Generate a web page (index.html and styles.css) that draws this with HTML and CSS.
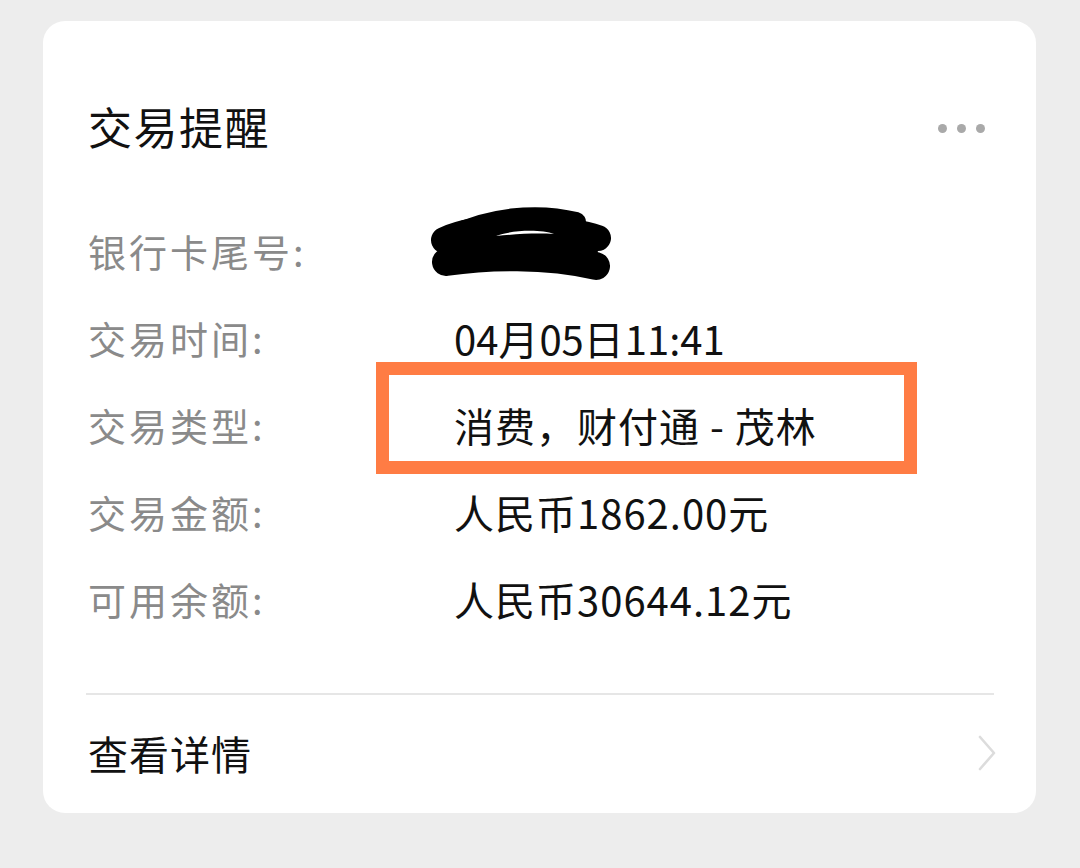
FILE: index.html
```html
<!DOCTYPE html>
<html lang="zh-CN">
<head>
<meta charset="utf-8">
<title>交易提醒</title>
<link rel="stylesheet" href="styles.css">
</head>
<body>
<div class="card">
  <div class="header">
    <div class="title">交易提醒</div>
    <div class="more"><span class="dot"></span><span class="dot"></span><span class="dot"></span></div>
  </div>
  <div class="rows">
    <div class="row">
      <div class="label">银行卡尾号:</div>
      <div class="value">
        <svg class="scribble" width="190" height="84" viewBox="0 0 190 84">
          <g fill="none" stroke="#000" stroke-linecap="round" stroke-linejoin="round">
            <path d="M18 34 C40 24, 70 20, 110 22 C140 24, 160 28, 172 32" stroke-width="26"/>
            <path d="M26 30 C60 12, 110 6, 150 16" stroke-width="20"/>
            <path d="M20 56 C60 50, 120 48, 170 60" stroke-width="28"/>
            <path d="M30 42 L160 44" stroke-width="24"/>
          </g>
          <path d="M70 30 C85 24, 115 23, 128 28 C110 27, 90 28, 70 30 Z" fill="#fff"/>
        </svg>
      </div>
    </div>
    <div class="row">
      <div class="label">交易时间:</div>
      <div class="value"><span class="num">04</span>月<span class="num">05</span>日<span class="num">11:41</span></div>
    </div>
    <div class="row">
      <div class="label">交易类型:</div>
      <div class="value">消费，财付通 - 茂林<span class="highlight"></span></div>
    </div>
    <div class="row">
      <div class="label">交易金额:</div>
      <div class="value">人民币1862.00元</div>
    </div>
    <div class="row">
      <div class="label">可用余额:</div>
      <div class="value">人民币30644.12元</div>
    </div>
  </div>
  <div class="divider"></div>
  <div class="footer">
    <div class="footer-text">查看详情</div>
    <svg class="chevron" width="20" height="36" viewBox="0 0 20 36">
      <path d="M3 2 L17 18 L3 34" fill="none" stroke="#dcdcdc" stroke-width="2.6" stroke-linecap="round" stroke-linejoin="round"/>
    </svg>
  </div>
</div>
</body>
</html>
```

FILE: styles.css
```css
* { box-sizing: border-box; }
html, body {
  margin: 0;
  padding: 0;
  background: #ededed;
}
body {
  font-family: "Noto Sans CJK SC", "Noto Sans", sans-serif;
  padding: 21px 44px 0 43px;
}
.card {
  width: 993px;
  height: 792px;
  background: #ffffff;
  border-radius: 22px;
  padding: 75px 51px 0 45px;
  display: flex;
  flex-direction: column;
}
.header {
  display: flex;
  align-items: center;
  justify-content: space-between;
  height: 60px;
}
.title {
  font-size: 44px;
  line-height: 60px;
  color: #111111;
  letter-spacing: 1.5px;
}
.more {
  display: flex;
  gap: 10px;
  margin-top: 4px;
}
.dot {
  width: 9px;
  height: 9px;
  border-radius: 50%;
  background: #a9a9a9;
}
.rows {
  margin-top: 51px;
  display: flex;
  flex-direction: column;
}
.row {
  height: 87px;
  display: flex;
  align-items: center;
}
.label {
  width: 366px;
  font-size: 38px;
  color: #8a8a8a;
  letter-spacing: 3px;
}
.value {
  font-size: 40px;
  line-height: 56px;
  color: #111111;
  letter-spacing: 1px;
  position: relative;
}
.num {
  letter-spacing: 0;
}
.scribble {
  display: block;
  margin-left: -28px;
  margin-top: -6px;
}
.highlight {
  position: absolute;
  left: -78px;
  top: -35px;
  width: 541px;
  height: 112px;
  border: 13px solid #ff7c44;
}
.divider {
  margin-top: 51px;
  margin-left: -2px;
  margin-right: -9px;
  height: 1.5px;
  background: #e6e6e6;
}
.footer {
  flex: 1;
  display: flex;
  align-items: center;
  justify-content: space-between;
  margin-right: -12px;
  padding-bottom: 2px;
}
.footer-text {
  font-size: 40px;
  color: #111111;
  letter-spacing: 1px;
}
.chevron {
  display: block;
}
```
